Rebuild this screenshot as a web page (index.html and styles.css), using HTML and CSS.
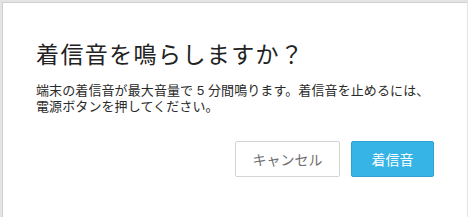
FILE: index.html
```html
<!DOCTYPE html>
<html lang="ja">
<head>
<meta charset="utf-8">
<link rel="stylesheet" href="styles.css">
</head>
<body>
<div class="frame">
  <div class="dialog">
    <h1 class="title">着信音を鳴らしますか？</h1>
    <div class="message">
      <span class="line">端末の着信音が最大音量で 5 分間鳴ります。着信音を止めるには、</span>
      <span class="line">電源ボタンを押してください。</span>
    </div>
    <div class="actions">
      <button class="btn btn-cancel">キャンセル</button>
      <button class="btn btn-primary">着信音</button>
    </div>
  </div>
</div>
</body>
</html>
```
FILE: styles.css
```css
html, body {
  margin: 0;
  padding: 0;
  background: #ffffff;
}
body {
  width: 468px;
  height: 217px;
  overflow: hidden;
  font-family: "Noto Sans CJK JP", "Liberation Sans", sans-serif;
}
.frame {
  box-sizing: border-box;
  width: 468px;
  height: 217px;
  padding: 2px 0 0 2px;
  background: #e4e4e4;
}
.dialog {
  box-sizing: border-box;
  width: 465px;
  height: 215px;
  background: #ffffff;
  border-top: 1px solid #d0d0d0;
  border-left: 1px solid #d0d0d0;
  padding: 0 0 0 33px;
}
.title {
  margin: 0;
  padding-top: 33px;
  font-size: 23px;
  font-weight: 400;
  line-height: 34px;
  color: #222222;
  letter-spacing: 1.4px;
}
.message {
  margin: 13px 0 0 0;
  font-family: "Liberation Sans", "Noto Sans CJK JP", sans-serif;
  font-size: 13px;
  color: #2a2a2a;
  letter-spacing: 0.1px;
}
.line {
  display: block;
  height: 16px;
  line-height: 16px;
}
.actions {
  display: flex;
  gap: 11px;
  margin-top: 26px;
  padding-left: 199px;
}
.btn {
  box-sizing: border-box;
  height: 36px;
  border-radius: 2px;
  font-family: "Noto Sans CJK JP", "Liberation Sans", sans-serif;
  font-size: 14px;
  padding: 0;
  cursor: pointer;
}
.btn-cancel {
  width: 105px;
  background: #ffffff;
  border: 1px solid #d4d4d4;
  color: #6f6f6f;
}
.btn-primary {
  width: 83px;
  background: #36b4e5;
  border: 1px solid #2ea3d3;
  color: #ffffff;
}
```
